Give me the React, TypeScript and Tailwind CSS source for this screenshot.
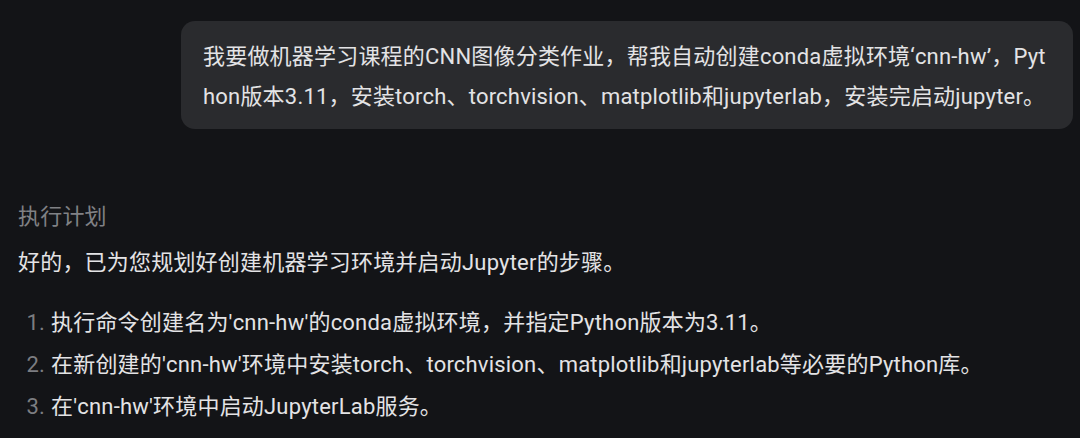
export default function App() {
  const steps = [
    "执行命令创建名为'cnn-hw'的conda虚拟环境，并指定Python版本为3.11。",
    "在新创建的'cnn-hw'环境中安装torch、torchvision、matplotlib和jupyterlab等必要的Python库。",
    "在'cnn-hw'环境中启动JupyterLab服务。",
  ];

  return (
    <div
      className="w-[1080px] h-[438px] overflow-hidden bg-[#131417] text-[#e3e3e5] text-[22px] leading-[40px] tracking-[0.2px]"
      style={{ fontFamily: 'Roboto, "Noto Sans CJK SC", sans-serif' }}
    >
      {/* User message */}
      <div className="flex justify-end pt-[21px] pr-[7px]">
        <div className="w-[892px] rounded-[14px] bg-[#2a2b2e] pl-[22px] pr-[20px] pt-[16px] pb-[12px] break-all">
          我要做机器学习课程的CNN图像分类作业，帮我自动创建conda虚拟环境‘cnn-hw’，Python版本3.11，安装torch、torchvision、matplotlib和jupyterlab，安装完启动jupyter。
        </div>
      </div>

      {/* Assistant reply */}
      <div className="pl-[18px] pt-[68px]">
        <div className="text-[#808185]">执行计划</div>
        <div className="mt-[6px]">好的，已为您规划好创建机器学习环境并启动Jupyter的步骤。</div>
        <ol className="mt-[20px] flex flex-col gap-[2px]">
          {steps.map((s, i) => (
            <li key={i} className="flex">
              <span className="w-[33px] text-right pr-[6px] text-[#7c7d81]">{i + 1}.</span>
              <span>{s}</span>
            </li>
          ))}
        </ol>
      </div>
    </div>
  );
}
